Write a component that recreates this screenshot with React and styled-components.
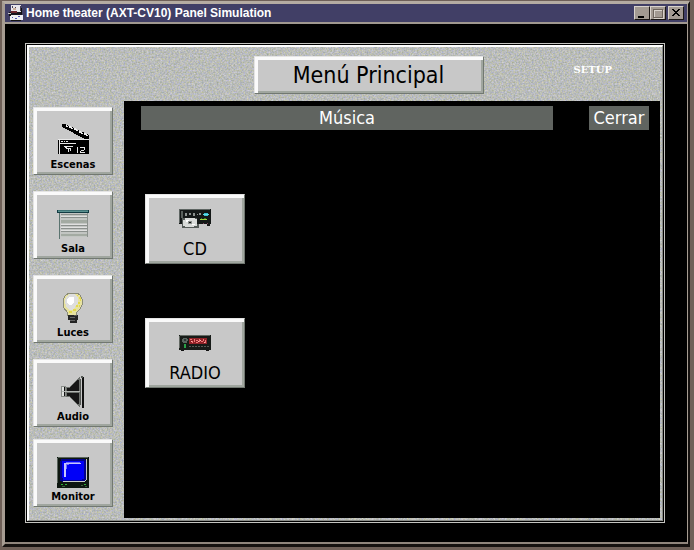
import React from 'react';
import styled, { createGlobalStyle } from 'styled-components';

const GlobalStyle = createGlobalStyle`
  * {
    box-sizing: border-box;
  }
  body {
    margin: 0;
    background: #6f6058;
  }
  button {
    margin: 0;
    padding: 0;
    border: 0;
    cursor: pointer;
  }
`;

const Desktop = styled.div`
  min-height: 100vh;
  padding: 1px 4px 3px 2px;
  background: #6f6058;
  font-family: "DejaVu Sans Condensed", "DejaVu Sans", sans-serif;
`;

const Window = styled.div`
  border-style: solid;
  border-width: 3px 2px 3px 3px;
  border-color: #b5aca2 #15110f #15110f #a69c92;
  background: #000;
`;

const TitleBar = styled.header`
  display: flex;
  align-items: center;
  height: 20px;
  padding: 0 3px;
  background: #413f66;
  border-bottom: 2px solid #a09890;
  border-right: 1px solid #a69c92;
`;

const TitleText = styled.h1`
  flex: 1;
  margin: 0 0 0 2px;
  color: #fff;
  font: bold 12px/16px "Liberation Sans", Arial, sans-serif;
  white-space: nowrap;
`;

const WindowButtons = styled.div`
  display: flex;
`;

const WindowButton = styled.button`
  width: 16px;
  height: 14px;
  margin-left: ${(props) => (props.$apart ? '2px' : '0')};
  background: #a39a92;
  border: 1px solid;
  border-color: #d8d2cb #1a1614 #1a1614 #d8d2cb;

  svg {
    display: block;
  }
`;

const Client = styled.main`
  padding: 19px 22px 19px 20px;
  border-right: 1px solid #a69c92;
  border-bottom: 2px solid #8f857c;
`;

const Panel = styled.div`
  padding: 1px;
  border: 1px solid #c4c4c0;
`;

const PanelFace = styled.div`
  position: relative;
  padding: 0 2px 2px 0;
  border-style: solid;
  border-width: 2px 1px 1px 2px;
  border-color: #fff #8a8c88 #8a8c88 #fff;
  background: #bcbdb8;
`;

const Grain = styled.svg`
  position: absolute;
  inset: 0;
  width: 100%;
  height: 100%;
`;

const PanelHeader = styled.div`
  position: relative;
  display: grid;
  grid-template-columns: 1fr 230px 1fr;
  align-items: start;
  height: 54px;
  padding: 9px 0 0 48px;
`;

const RaisedButton = styled.button`
  padding: 2px;
  background: #c8c8c8;
  border: 1px solid;
  border-color: #e4e4e4 #717871 #717871 #e4e4e4;
  box-shadow: inset 3px 3px 0 #fafafa, inset -2px -2px 0 #a0a69f;
  color: #000;
  font-family: inherit;
`;

const MenuButton = styled(RaisedButton)`
  grid-column: 2;
  height: 38px;
  font-size: 23px;
  line-height: 28px;
`;

const SetupButton = styled.button`
  justify-self: end;
  margin: 6px 36px 0 0;
  padding: 0 12px;
  background: none;
  color: #fff;
  font: bold 10px/16px "DejaVu Serif", serif;
`;

const PanelBody = styled.div`
  position: relative;
  display: flex;
`;

const Sidebar = styled.nav`
  display: flex;
  flex-direction: column;
  gap: 12px;
  width: 95px;
  padding: 6px 0 11px 4px;
`;

const RoomControls = styled.div`
  display: flex;
  flex-direction: column;
  gap: 16px;
`;

const IconButton = styled(RaisedButton)`
  display: flex;
  flex-direction: column;
  align-items: center;
  justify-content: flex-end;

  svg {
    display: block;
    flex: none;
  }
`;

const SideButton = styled(IconButton)`
  gap: 2px;
  width: 80px;
  height: 68px;
  font-size: 11px;
  font-weight: bold;
  line-height: 14px;
`;

const Screen = styled.section`
  flex: 1;
  padding: 5px 11px 0 17px;
  background: #000;
`;

const ScreenHeader = styled.div`
  display: flex;
  gap: 36px;
`;

const ScreenTitle = styled.h2`
  flex: 1;
  margin: 0;
  background: #606460;
  color: #fff;
  font-size: 18px;
  font-weight: normal;
  line-height: 24px;
  text-align: center;
`;

const CloseButton = styled.button`
  width: 60px;
  background: #606460;
  color: #fff;
  font-family: inherit;
  font-size: 18px;
  line-height: 24px;
`;

const Sources = styled.div`
  display: flex;
  flex-direction: column;
  gap: 54px;
  padding: 64px 4px;
`;

const SourceButton = styled(IconButton)`
  gap: 3px;
  width: 100px;
  height: 70px;
  font-size: 18px;
  line-height: 24px;
`;

const Icon = ({ children, size = 32 }) => (
  <svg width={size} height={size} viewBox={`0 0 ${size} ${size}`} shapeRendering="crispEdges" aria-hidden="true">
    {children}
  </svg>
);

const AppIcon = () => (
  <Icon size={16}>
    <path d="M3 0H13V7H3z" fill="#e8e4ea" />
    <path d="M4 1h1v2H4zM7 2h1v1H7zM12 1h1v5h-1z" fill="#4a4052" />
    <path d="M5 3h3v2H5z" fill="#c9ad9b" />
    <path d="M1 7H14V10H1z" fill="#17131f" />
    <path d="M3 6h6v2H3z" fill="#6d2530" />
    <path d="M0 8h3v1H0z" fill="#c8c4c8" />
    <path d="M2 10H15V15H2z" fill="#eeeef4" />
    <path d="M4 12h1v1H4zM10 11h2v1h-2zM7 13h2v1H7z" fill="#5353b8" />
    <path d="M1 9H3V11H1zM13 3h1v6h-1zM3 15H13V16H3z" fill="#111" />
  </Icon>
);

const ClapperIcon = () => (
  <Icon>
    <path d="M5 0h3l24 11v4h-4L5 3z" fill="#000" />
    <path d="M9 1h1v1h1v1H9zM12 2h2v1h1v1h1v1h-2V4h-2zM17 4h2v1h1v1h1v1h-2V6h-2zM22 7h2v1h1v1h1v1h-2V9h-2zM27 9h2v1h1v1h1v1h-2v-1h-2z" fill="#eee" />
    <path d="M1 15H32V30H1z" fill="#000" />
    <path d="M1 15H32V16H1zM2 16H3V30H2zM3 19H19V20H3zM7 22H16V23H7zM20 23H21V29H20zM23 23H28V24H23zM27 24H28V26H27zM24 26H27V27H24zM23 27H24V29H23zM23 28H28V29H23z" fill="#e8e8e8" />
    <path d="M4 17h2v1H4zM7 17h1v1H7zM9 17h2v1H9zM8 23h2v1H8zM9 24h5v1H9zM11 25h1v3h-1zM13 25h1v2h-1z" fill="#e8e8e8" />
  </Icon>
);

const BlindIcon = () => (
  <Icon>
    <path d="M4 5H31V29H4z" fill="#c2c5c2" />
    <path d="M4 6H31V7H4zM4 9H31V10H4zM4 17H31V18H4zM4 20H31V21H4zM4 23H31V24H4z" fill="#8b908d" />
    <path d="M4 8H31V9H4zM4 16H31V17H4zM4 19H31V20H4zM4 22H31V23H4z" fill="#e0e0e0" />
    <path d="M4 12H31V15H4zM4 26H31V28H4z" fill="#a3aaa2" />
    <path d="M0 2H32V5H0z" fill="#3f7375" />
    <path d="M1 3H31V4H1z" fill="#5b9190" />
    <path d="M0 4H32V5H0zM0 2H1V5H0zM31 2H32V5H31z" fill="#123b43" />
    <path d="M2 5H3V31H2z" fill="#5b7470" />
    <path d="M30 5H31V29H30z" fill="#8b918d" />
  </Icon>
);

const BulbIcon = () => (
  <Icon>
    <path d="M12 1h8l3 2 2 4v6l-2 4-3 3-1 4h-8l-1-4-3-4-1-4 0-4 2-4z" fill="#e7e2a0" stroke="#8b8c78" />
    <path d="M12 2h6l3 4v5l-3 4-3 3h-3l-3-4-1-5 1-4z" fill="#dedede" />
    <path d="M12 5h5v5l-3 3h-2l-2-3V7z" fill="#fff" />
    <path d="M20 3h1v1h-1zM22 5h2v4h-1V7h-1zM21 10h2v2h-2zM19 13h2v2h-2zM16 17h3v2h-3zM12 19h3v2h-3zM22 13h1v2h-1z" fill="#e4d94d" />
    <path d="M11 23H21V28H20V31H13V28H11z" fill="#252525" />
    <path d="M13 25h5v1h-5zM13 28h5v1h-5z" fill="#666" />
    <path d="M17 23h3v1h-3z" fill="#555" />
  </Icon>
);

const SpeakerIcon = () => (
  <Icon>
    <path d="M9 11h3L23 1v30L12 21H9z" fill="#6d716d" />
    <path d="M4 10H9V21H4z" fill="#888c88" />
    <path d="M5 11H7V20H5z" fill="#e0e2e0" />
    <path d="M7 11H8V20H7z" fill="#111" />
    <path d="M10 12h2l2-2 2-2 2-2 2-2h2v11H10zM10 17h12v11h-2l-2-2-2-2-2-2-2-2h-2z" fill="#161616" />
    <path d="M5 15H23V16H5z" fill="#b4b8b4" />
    <path d="M25 1H27V32H25z" fill="#111" />
    <path d="M24 0H26V2H24zM23 3H24V29H23z" fill="#555955" />
  </Icon>
);

const MonitorIcon = () => (
  <Icon>
    <path d="M0 1H32V32H0z" fill="#0d160f" />
    <path d="M1 1H31V2H1zM0 2H1V27H0z" fill="#59645b" />
    <path d="M4 3H28V4H29V25H27V26H5V25H3V5H4z" fill="#02028a" />
    <path d="M5 5H27V23H25V24H6V22H5z" fill="#0000f8" />
    <path d="M7 7H24V8H9V21H7z" fill="#c5c5ff" />
    <path d="M9 6H23V7H9zM9 8H12V9H10V13H9z" fill="#6f6fff" />
    <path d="M29 3H30V24H29zM28 24H29V25H28zM6 25H28V26H6z" fill="#c7ccc7" />
    <path d="M4 28h2v1H4zM8 28h2v1H8zM27 28h2v1h-2z" fill="#2eae35" />
    <path d="M5 30h3v1H5zM24 29h2v1h-2zM28 30h2v1h-2z" fill="#36603a" />
  </Icon>
);

const CdIcon = () => (
  <Icon>
    <path d="M0 7H32V22H0z" fill="#141817" />
    <path d="M0 7H31V8H0zM0 8H1V21H0z" fill="#5e6562" />
    <path d="M2 9H4V16H2z" fill="#59605c" />
    <path d="M6 11H8V14H6zM10 11H12V13H10zM14 11H16V14H14zM18 12H19V13H18zM20 11H22V13H20z" fill="#8b918e" />
    <path d="M25 11H29V14H25z" fill="#32bdd1" />
    <path d="M24 12H30V13H24z" fill="#63d9e5" />
    <path d="M21 17H28V18H21z" fill="#9dd73d" />
    <path d="M22 16h1v1h-1zM25 16h2v1h-2z" fill="#397b34" />
    <path d="M3 16H18V22H20V26H3z" fill="#555b58" />
    <path d="M6 16H16V17H18V24H15V25H6V24H4V18H6z" fill="#d9dbd9" />
    <path d="M7 18h3v2H7zM13 22h3v1h-3z" fill="#fff" />
    <path d="M9 19H13V22H9z" fill="#8d928f" />
    <path d="M10 20H12V21H10z" fill="#111" />
    <path d="M28 22h3v2h-3z" fill="#171717" />
    <path d="M24 21h1v1h-1zM28 21h1v1h-1z" fill="#84415d" />
  </Icon>
);

const RadioIcon = () => (
  <Icon>
    <path d="M0 9H32V24H0z" fill="#171b18" />
    <path d="M1 9H31V10H1zM0 10H1V22H0z" fill="#636963" />
    <path d="M4 12H8V13H9V15H8V17H4V16H3V13H4z" fill="#5a645f" />
    <path d="M5 13H7V15H5z" fill="#2b3833" />
    <path d="M5 18H7V22H5z" fill="#28a047" />
    <path d="M10 12H28V18H10z" fill="#8e2328" />
    <path d="M11 13h2v1h-2zM13 15h1v2h-1zM15 13h1v3h-1zM17 14h2v1h-2zM20 13h1v3h-1zM22 15h2v1h-2zM24 13h1v2h-1zM26 14h1v3h-1zM17 16h2v1h-2z" fill="#ef7777" />
    <path d="M12 15h1v1h-1zM19 15h1v1h-1zM21 14h1v1h-1zM25 16h1v1h-1z" fill="#ffb1ad" />
    <path d="M10 20h2v1h-2zM13 20h2v1h-2zM16 20h2v1h-2zM19 20h2v1h-2zM22 20h2v1h-2zM25 20h2v1h-2zM28 20h2v1h-2z" fill="#555b55" />
    <path d="M2 24H5V25H2zM27 24H30V25H27z" fill="#111" />
  </Icon>
);

const roomControls = [
  { label: 'Escenas', icon: <ClapperIcon /> },
  { label: 'Sala', icon: <BlindIcon /> },
  { label: 'Luces', icon: <BulbIcon /> },
  { label: 'Audio', icon: <SpeakerIcon /> },
];

function App() {
  return (
    <Desktop>
      <GlobalStyle />
      <Window>
        <TitleBar>
          <AppIcon />
          <TitleText>Home theater (AXT-CV10) Panel Simulation</TitleText>
          <WindowButtons>
            <WindowButton aria-label="Minimizar">
              <svg width="14" height="12" shapeRendering="crispEdges">
                <path d="M3 9h6v2H3z" fill="#000" />
              </svg>
            </WindowButton>
            <WindowButton aria-label="Maximizar">
              <svg width="14" height="12" shapeRendering="crispEdges">
                <path d="M3 3h9v8H3z" fill="none" stroke="#d8d2cb" />
                <path d="M2 2h9v8H2z" fill="none" stroke="#6d645c" />
              </svg>
            </WindowButton>
            <WindowButton $apart aria-label="Cerrar ventana">
              <svg width="14" height="12" shapeRendering="crispEdges">
                <path d="M3 2h2v1h1v1h2V3h1V2h2v1h-1v1H9v1H8v1h1v1h1v1h1v1H9V8H8V7H6v1H5v1H3V8h1V7h1V6h1V5H5V4H4V3H3z" fill="#000" />
              </svg>
            </WindowButton>
          </WindowButtons>
        </TitleBar>
        <Client>
          <Panel>
            <PanelFace>
              <Grain aria-hidden="true">
                <filter id="grain" x="0" y="0" width="100%" height="100%" colorInterpolationFilters="sRGB">
                  <feTurbulence type="fractalNoise" baseFrequency="0.6" numOctaves="2" seed="4" />
                  <feColorMatrix values="0.3 0 0 0 0.58  0.24 0.06 0 0 0.59  0.12 0 0.36 0 0.49  0 0 0 0 1" />
                </filter>
                <rect width="100%" height="100%" filter="url(#grain)" />
              </Grain>
              <PanelHeader>
                <MenuButton>Menú Principal</MenuButton>
                <SetupButton>SETUP</SetupButton>
              </PanelHeader>
              <PanelBody>
                <Sidebar>
                  <RoomControls>
                    {roomControls.map(({ label, icon }) => (
                      <SideButton key={label}>
                        {icon}
                        {label}
                      </SideButton>
                    ))}
                  </RoomControls>
                  <SideButton>
                    <MonitorIcon />
                    Monitor
                  </SideButton>
                </Sidebar>
                <Screen>
                  <ScreenHeader>
                    <ScreenTitle>Música</ScreenTitle>
                    <CloseButton>Cerrar</CloseButton>
                  </ScreenHeader>
                  <Sources>
                    <SourceButton>
                      <CdIcon />
                      CD
                    </SourceButton>
                    <SourceButton>
                      <RadioIcon />
                      RADIO
                    </SourceButton>
                  </Sources>
                </Screen>
              </PanelBody>
            </PanelFace>
          </Panel>
        </Client>
      </Window>
    </Desktop>
  );
}

export default App;
